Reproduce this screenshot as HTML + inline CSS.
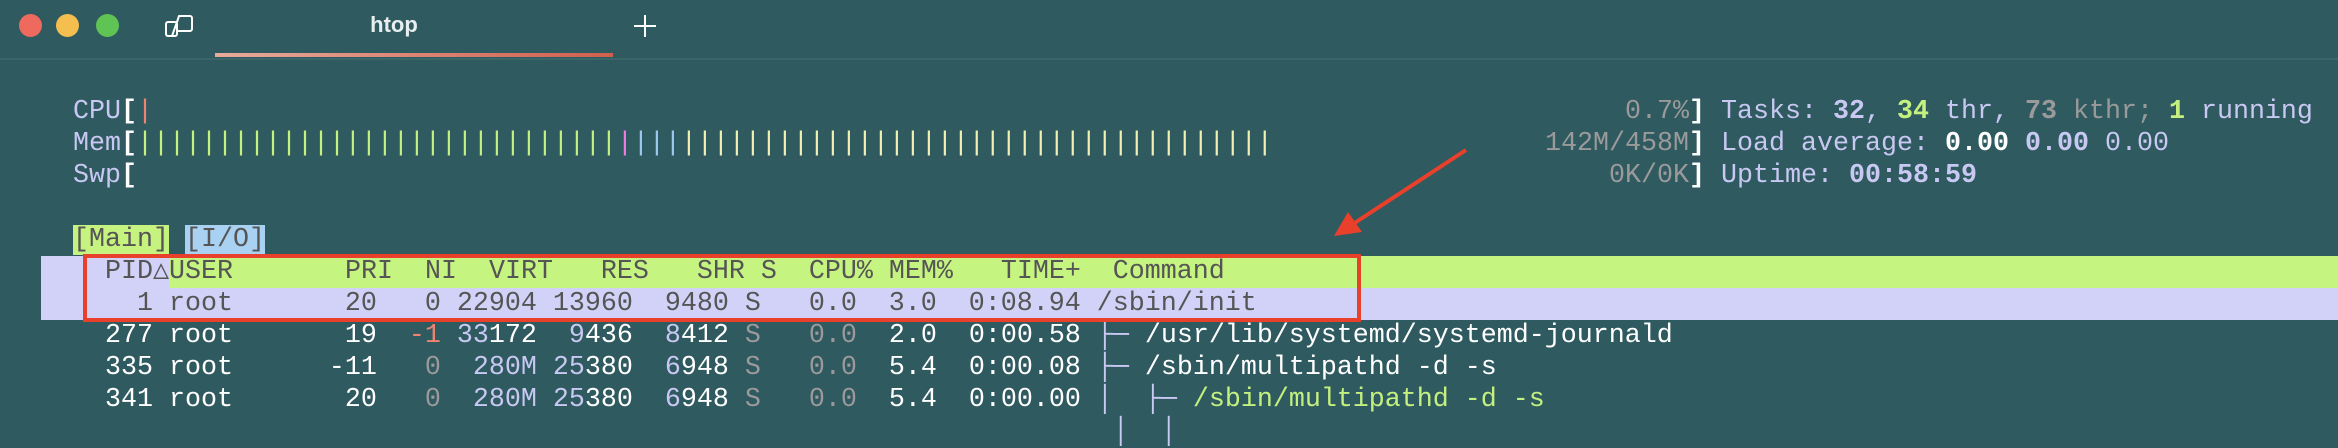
<!DOCTYPE html>
<html><head><meta charset="utf-8"><style>
html,body{margin:0;padding:0;}
body{width:2338px;height:422px;background:#2f5a60;position:relative;overflow:hidden;font-family:"Liberation Mono","DejaVu Sans Mono",monospace;}
.r{position:absolute;left:41px;height:32px;line-height:32px;font-size:26.67px;white-space:pre;color:#fff;}
.v{position:absolute;right:649px;height:32px;line-height:32px;font-size:26.67px;white-space:pre;color:#9a9a9a;}
.t{position:absolute;left:1689px;height:32px;line-height:32px;font-size:26.67px;white-space:pre;color:#c8c8f2;}
.lv{color:#c8c8f2}.gr{color:#9a9a9a}.g{color:#c3f07f}.rd{color:#ee8470}.w{color:#fff}.b{font-weight:bold}
.dot{position:absolute;top:14px;width:23px;height:23px;border-radius:50%;}
</style></head><body>
<div class="dot" style="left:19px;background:#ee6a5e"></div>
<div class="dot" style="left:56px;background:#f4bf4f"></div>
<div class="dot" style="left:96px;background:#5fc454"></div>
<svg style="position:absolute;left:164px;top:13px" width="30" height="26" viewBox="0 0 30 26"><rect x="2" y="9" width="11" height="14" rx="2" fill="none" stroke="#fff" stroke-width="2"/><path d="M13 9 L15 3 h11 a2 2 0 0 1 2 2 v11 a2 2 0 0 1 -2 2 h-13" fill="none" stroke="#fff" stroke-width="2" stroke-linejoin="round"/><path d="M8 23 l5 -14" stroke="#fff" stroke-width="2"/></svg>
<div style="position:absolute;left:354px;top:12px;width:80px;text-align:center;font-family:'Liberation Sans',sans-serif;font-weight:bold;font-size:22px;color:#e8eef0">htop</div>
<div style="position:absolute;left:634px;top:25px;width:22px;height:2px;background:#fff"></div>
<div style="position:absolute;left:644px;top:15px;width:2px;height:22px;background:#fff"></div>
<div style="position:absolute;left:215px;top:53px;width:398px;height:4px;background:linear-gradient(90deg,#e8aa9c,#d0604e)"></div>
<div style="position:absolute;left:0;top:58px;width:2338px;height:2px;background:#3a6569"></div>

<div class="r" style="top:96px"><span class="lv">  CPU</span><span class="b">[</span><span class="rd">|</span></div>
<div class="v" style="top:96px">0.7%</div>
<div class="t" style="top:96px"><b class="w">]</b> Tasks: <b>32</b>, <b class="g">34</b> thr, <b class="gr">73</b><span class="gr"> kthr; </span><b class="g">1</b> running</div>

<div class="r" style="top:128px"><span class="lv">  Mem</span><span class="b">[</span><span class="g">||||||||||||||||||||||||||||||</span><span style="color:#f07ae0">|</span><span style="color:#9cc8f0">|||</span><span style="color:#f0f0b0">|||||||||||||||||||||||||||||||||||||</span></div>
<div class="v" style="top:128px">142M/458M</div>
<div class="t" style="top:128px"><b class="w">]</b> Load average: <b class="w">0.00</b> <b>0.00</b> 0.00</div>

<div class="r" style="top:160px"><span class="lv">  Swp</span><span class="b">[</span></div>
<div class="v" style="top:160px">0K/0K</div>
<div class="t" style="top:160px"><b class="w">]</b> Uptime: <b>00:58:59</b></div>

<div class="r" style="top:224px">  <span style="background:#c6f27f;color:#555">[Main]</span> <span style="background:#a9d2f2;color:#555">[I/O]</span></div>

<div style="position:absolute;left:41px;top:256px;width:2297px;height:32px;background:#c6f480"></div>
<div style="position:absolute;left:41px;top:256px;width:128px;height:32px;background:#d2d2f8"></div>
<div style="position:absolute;left:41px;top:288px;width:2297px;height:32px;background:#d2d2f8"></div>
<div class="r" style="top:256px;color:#555">    PID△USER       PRI  NI  VIRT   RES   SHR S  CPU% MEM%   TIME+  Command</div>
<div class="r" style="top:288px;color:#555">      1 root       20   0 22904 13960  9480 S   0.0  3.0  0:08.94 /sbin/init</div>
<div class="r" style="top:320px">    277 root       19  <span class="rd">-1</span> <span class="lv">33</span>172  <span class="lv">9</span>436  <span class="lv">8</span>412 <span class="gr">S</span>   <span class="gr">0.0</span>  2.0  0:00.58 <span class="lv">├─ </span>/usr/lib/systemd/systemd-journald</div>
<div class="r" style="top:352px">    335 root      -11   <span class="gr">0</span>  <span class="lv">280M</span> <span class="lv">25</span>380  <span class="lv">6</span>948 <span class="gr">S</span>   <span class="gr">0.0</span>  5.4  0:00.08 <span class="lv">├─ </span>/sbin/multipathd -d -s</div>
<div class="r" style="top:384px">    341 root       20   <span class="gr">0</span>  <span class="lv">280M</span> <span class="lv">25</span>380  <span class="lv">6</span>948 <span class="gr">S</span>   <span class="gr">0.0</span>  5.4  0:00.00 <span class="lv">│  ├─ </span><span class="g">/sbin/multipathd -d -s</span></div>
<div class="r" style="top:416px">                                                                   <span class="lv">│  │</span></div>

<div style="position:absolute;left:83px;top:254px;width:1270px;height:60px;border:4px solid #e8402a"></div>
<svg style="position:absolute;left:0;top:0" width="2338" height="422"><line x1="1466" y1="150" x2="1350" y2="226" stroke="#e8402a" stroke-width="4"/><path d="M1334 236 L1348 212 L1362 232 Z" fill="#e8402a"/></svg>
</body></html>
